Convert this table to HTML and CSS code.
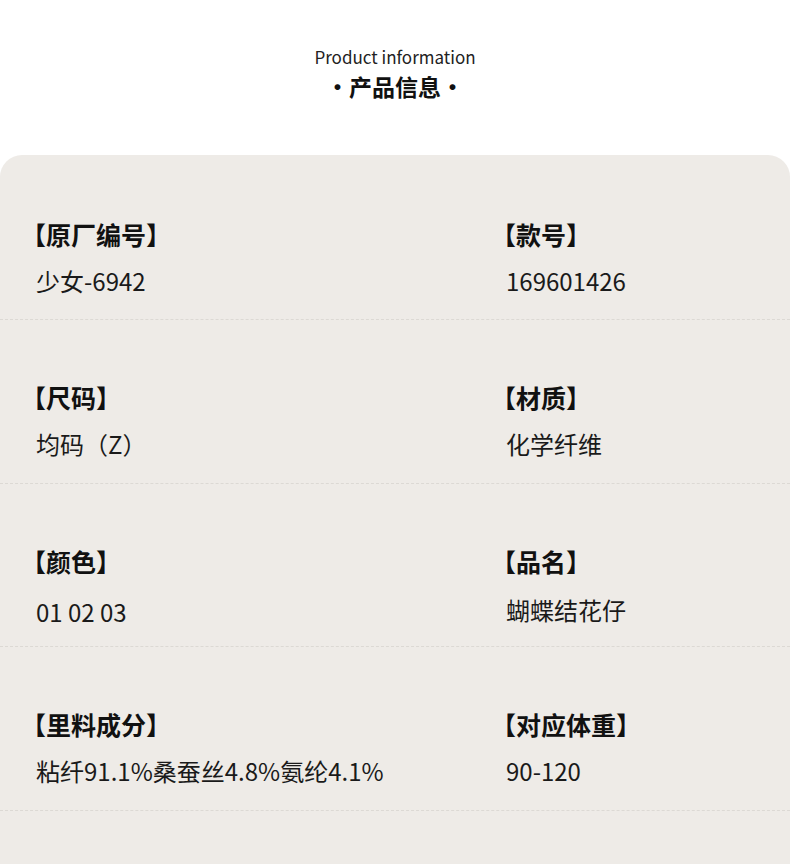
FILE: index.html
```html
<!DOCTYPE html>
<html lang="zh-CN">
<head>
<meta charset="utf-8">
<title>产品信息</title>
<link rel="stylesheet" href="styles.css">
</head>
<body>
<header class="head">
  <div class="head-en">Product information</div>
  <div class="head-cn">·产品信息·</div>
</header>
<section class="card">
  <div class="row">
    <div class="cell"><div class="label">【原厂编号】</div><div class="value">少女-6942</div></div>
    <div class="cell"><div class="label">【款号】</div><div class="value">169601426</div></div>
  </div>
  <div class="row">
    <div class="cell"><div class="label">【尺码】</div><div class="value">均码（Z）</div></div>
    <div class="cell"><div class="label">【材质】</div><div class="value">化学纤维</div></div>
  </div>
  <div class="row">
    <div class="cell"><div class="label">【颜色】</div><div class="value value-low">01 02 03</div></div>
    <div class="cell"><div class="label">【品名】</div><div class="value value-mid">蝴蝶结花仔</div></div>
  </div>
  <div class="row">
    <div class="cell"><div class="label">【里料成分】</div><div class="value">粘纤91.1%桑蚕丝4.8%氨纶4.1%</div></div>
    <div class="cell"><div class="label">【对应体重】</div><div class="value">90-120</div></div>
  </div>
</section>
</body>
</html>
```
FILE: styles.css
```css
html, body {
  margin: 0;
  padding: 0;
  background: #ffffff;
}
body {
  width: 790px;
  height: 864px;
  overflow: hidden;
  font-family: "Noto Sans CJK SC", "Noto Sans", sans-serif;
  color: #1a1a1a;
}
.head {
  display: flex;
  flex-direction: column;
  align-items: center;
  padding-top: 44px;
  height: 155px;
  box-sizing: border-box;
}
.head-en {
  font-size: 17px;
  line-height: 26px;
  color: #222;
}
.head-cn {
  font-size: 23px;
  font-weight: 700;
  line-height: 32px;
  color: #111;
}
.card {
  background: #eeebe7;
  border-radius: 22px 22px 0 0;
  padding-top: 2px;
  height: 707px;
}
.row {
  display: grid;
  grid-template-columns: 470px 1fr;
  height: 162.4px;
  border-bottom: 1px dashed #dcd9d4;
  box-sizing: content-box;
}
.cell {
  display: flex;
  flex-direction: column;
  padding-top: 62px;
  padding-left: 36px;
}
.label {
  font-size: 25px;
  font-weight: 700;
  line-height: 30px;
  margin-left: -15px;
  color: #111;
}
.value {
  font-size: 24px;
  line-height: 30px;
  margin-top: 17px;
  color: #1a1a1a;
}
.value-low {
  margin-top: 21px;
}
.value-mid {
  margin-top: 19px;
}
```
